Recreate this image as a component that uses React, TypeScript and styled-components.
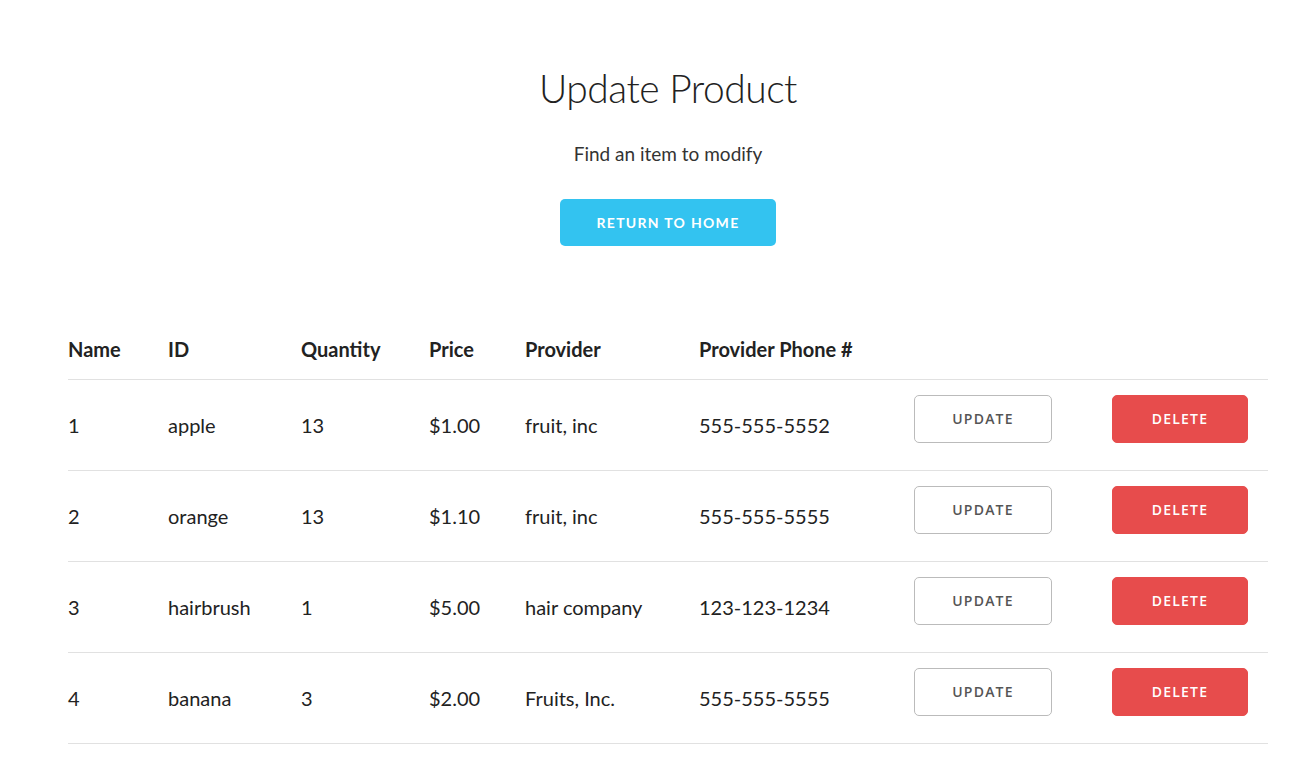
import React from 'react'
import styled, { createGlobalStyle } from 'styled-components'

const GlobalStyle = createGlobalStyle`
  html, body {
    margin: 0;
    padding: 0;
    background: #fff;
  }
  body {
    font-family: Lato, 'Open Sans', sans-serif;
    color: #222;
  }
`

type Product = {
  id: number
  name: string
  quantity: number
  price: string
  provider: string
  phone: string
}

const products: Product[] = [
  { id: 1, name: 'apple', quantity: 13, price: '$1.00', provider: 'fruit, inc', phone: '555-555-5552' },
  { id: 2, name: 'orange', quantity: 13, price: '$1.10', provider: 'fruit, inc', phone: '555-555-5555' },
  { id: 3, name: 'hairbrush', quantity: 1, price: '$5.00', provider: 'hair company', phone: '123-123-1234' },
  { id: 4, name: 'banana', quantity: 3, price: '$2.00', provider: 'Fruits, Inc.', phone: '555-555-5555' },
]

const columnWidths = [85, 133, 128, 96, 174, 215, 198, 171]

export default function App() {
  return (
    <>
      <GlobalStyle />
      <Page>
        <Header>
          <Title>Update Product</Title>
          <Subtitle>Find an item to modify</Subtitle>
          <PrimaryButton>Return to Home</PrimaryButton>
        </Header>
        <Table>
          <colgroup>
            {columnWidths.map((w, i) => (
              <col key={i} style={{ width: w }} />
            ))}
          </colgroup>
          <thead>
            <tr>
              <Th>Name</Th>
              <Th>ID</Th>
              <Th>Quantity</Th>
              <Th>Price</Th>
              <Th>Provider</Th>
              <Th>Provider Phone #</Th>
              <Th />
              <Th />
            </tr>
          </thead>
          <tbody>
            {products.map((p) => (
              <tr key={p.id}>
                <Td>{p.id}</Td>
                <Td>{p.name}</Td>
                <Td>{p.quantity}</Td>
                <Td>{p.price}</Td>
                <Td>{p.provider}</Td>
                <Td>{p.phone}</Td>
                <Td>
                  <RowButton>Update</RowButton>
                </Td>
                <Td>
                  <RowButton danger>Delete</RowButton>
                </Td>
              </tr>
            ))}
          </tbody>
        </Table>
      </Page>
    </>
  )
}

const Page = styled.div`
  width: 1200px;
  margin-left: 68px;
  padding-top: 64px;
`
const Header = styled.div`
  display: flex;
  flex-direction: column;
  align-items: center;
  margin-bottom: 73px;
`
const Title = styled.h1`
  margin: 0;
  font-size: 39px;
  line-height: 48px;
  font-weight: 300;
  letter-spacing: -0.5px;
  color: #222;
`
const Subtitle = styled.p`
  margin: 29px 0 0;
  font-size: 19px;
  line-height: 26px;
  font-weight: 400;
  color: #333;
`
const PrimaryButton = styled.button`
  margin-top: 32px;
  width: 216px;
  height: 47px;
  border: none;
  border-radius: 5px;
  background: #33c3f0;
  color: #fff;
  font-family: Lato, sans-serif;
  font-size: 14px;
  font-weight: 700;
  letter-spacing: 1.3px;
  text-transform: uppercase;
  cursor: pointer;
`
const Table = styled.table`
  width: 1200px;
  table-layout: fixed;
  border-collapse: collapse;
`
const Th = styled.th`
  height: 60px;
  padding: 0 0 0 15px;
  text-align: left;
  font-size: 20px;
  font-weight: 700;
  color: #222;
  border-bottom: 1px solid #e1e1e1;
  vertical-align: middle;
  &:first-child {
    padding-left: 0;
  }
`
const Td = styled.td`
  height: 90px;
  padding: 0 0 0 15px;
  text-align: left;
  font-size: 20px;
  font-weight: 400;
  color: #222;
  border-bottom: 1px solid #e1e1e1;
  vertical-align: middle;
  &:first-child {
    padding-left: 0;
  }
`
const RowButton = styled.button<{ danger?: boolean }>`
  display: block;
  width: ${(p) => (p.danger ? '136px' : '138px')};
  height: 48px;
  margin-bottom: 13px;
  margin-top: 0;
  border-radius: 5px;
  border: 1px solid ${(p) => (p.danger ? '#e74c4c' : '#bbb')};
  background: ${(p) => (p.danger ? '#e74c4c' : '#fff')};
  color: ${(p) => (p.danger ? '#fff' : '#555')};
  font-family: 'Open Sans', sans-serif;
  font-size: 14px;
  font-weight: 600;
  letter-spacing: 1.2px;
  text-transform: uppercase;
  cursor: pointer;
`
